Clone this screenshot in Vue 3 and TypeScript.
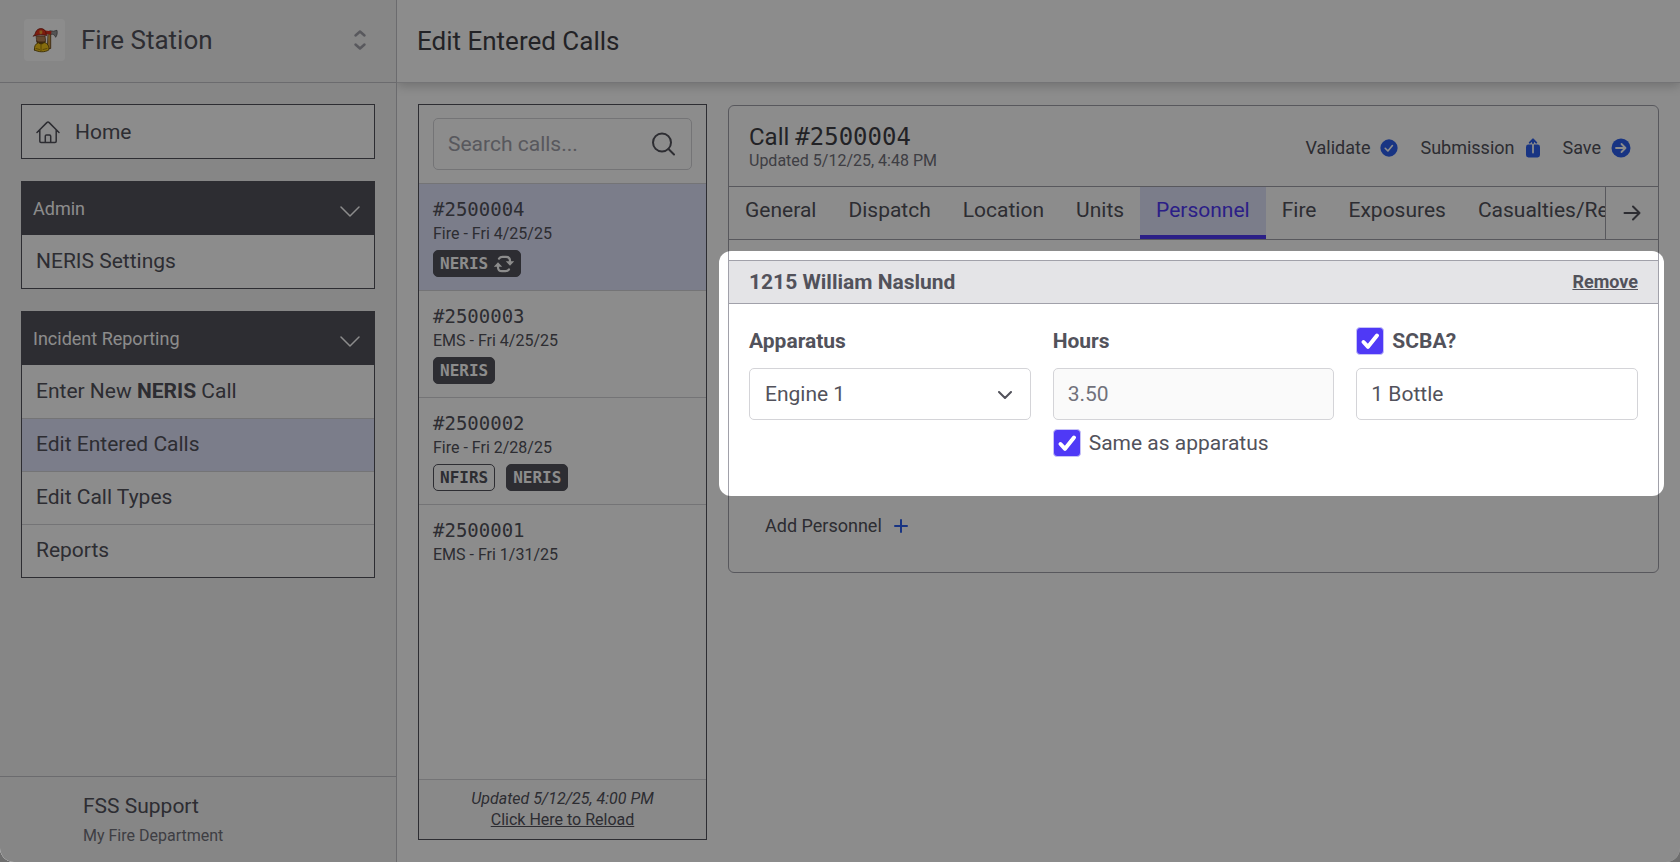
<script setup lang="ts">
import { ref } from 'vue'

interface Call {
  id: string
  summary: string
  badges: { label: string; outline?: boolean; sync?: boolean }[]
}

const calls: Call[] = [
  { id: '#2500004', summary: 'Fire - Fri 4/25/25', badges: [{ label: 'NERIS', sync: true }] },
  { id: '#2500003', summary: 'EMS - Fri 4/25/25', badges: [{ label: 'NERIS' }] },
  { id: '#2500002', summary: 'Fire - Fri 2/28/25', badges: [{ label: 'NFIRS', outline: true }, { label: 'NERIS' }] },
  { id: '#2500001', summary: 'EMS - Fri 1/31/25', badges: [] },
]
const selectedCall = ref('#2500004')

const tabs = ['General', 'Dispatch', 'Location', 'Units', 'Personnel', 'Fire', 'Exposures', 'Casualties/Rescues']
const activeTab = ref('Personnel')

const search = ref('')
const apparatus = ref('Engine 1')
const hours = ref('3.50')
const sameAsApparatus = ref(true)
const scba = ref(true)
const bottles = ref('1 Bottle')
</script>

<template>
  <div class="app">
    <aside class="sidebar">
      <button class="station" type="button">
        <span class="logo">
          <svg viewBox="0 0 26 26" width="26" height="26" aria-hidden="true">
            <path d="M16.500 5.500h2.200v16h-3z" fill="#d9a040" stroke="#5c3a12" stroke-width=".8" />
            <path d="M18 3.800l3.500.4 3.500-.9c.6 2.500 0 5.500-1.400 7-.6-1.800-1.600-2.600-3-3H18z" fill="#9a9a9a" stroke="#4a4a4a" stroke-width=".7" />
            <path d="M13 3.600l6.500.6-.5 3.200-5.500-.3z" fill="#e0301e" />
            <path d="M4.500 9h8.500l.5 4c0 3-2 5-4.500 5s-4.500-2-4.500-5z" fill="#b98457" stroke="#5a3a20" stroke-width=".7" />
            <path d="M4.500 13c1 2 3 1.500 4.500 1.500s3.500.5 4.500-1c0 3.500-2 4.800-4.500 4.800s-4.500-2-4.500-5.300z" fill="#70451f" />
            <path d="M1.500 9c1-1 1.500-1.500 2-3.500C4.500 3 6.500 1.600 8.800 1.600c3 0 5 2 5.200 4.600l.6 2.300c-4-1.200-8-1-13.100.5z" fill="#e3341d" stroke="#7b180c" stroke-width=".8" />
            <path d="M7.500 3.500h2.800v2.800l-1.400 1-1.400-1z" fill="#f0a030" />
            <path d="M2.500 23c-.5-3.500 1-6.500 4-7.200 2 1.700 4 1.500 5.500-.3 3.500.5 5.500 4 4.800 7.500-4 2.400-10 2.400-14.300 0z" fill="#f5c518" stroke="#6b5208" stroke-width=".9" />
            <path d="M9 17.500v6.500M4 21.500l3.500 1M11 22.500l4-1" stroke="#9b7b0c" stroke-width=".9" fill="none" />
          </svg>
        </span>
        <span class="station-name">Fire Station</span>
        <svg class="sort" viewBox="0 0 14 22" width="14" height="22" aria-hidden="true">
          <path d="M2.500 6.500L7 2.500l4.500 4M2.500 15.500L7 19.500l4.500-4" />
        </svg>
      </button>

      <nav class="menu" aria-label="Main">
        <section class="group">
          <a class="home" href="#">
            <svg viewBox="0 0 24 24" width="24" height="24" aria-hidden="true">
              <path d="M1 12.500L10.800 2.600a1.700 1.700 0 0 1 2.400 0L23 12.500M3.800 10v11.200c0 .7.500 1.200 1.200 1.200h14c.7 0 1.200-.5 1.200-1.200V10M9.300 22.400v-6.200c0-.7.500-1.200 1.200-1.200h3c.7 0 1.200.5 1.200 1.200v6.200" />
            </svg>
            Home
          </a>
        </section>
        <section class="group">
          <button class="group-title" type="button">
            Admin
            <svg viewBox="0 0 20 12" width="20" height="12" aria-hidden="true"><path d="M1 1l9 9 9-9" /></svg>
          </button>
          <a class="item" href="#">NERIS Settings</a>
        </section>
        <section class="group">
          <button class="group-title" type="button">
            Incident Reporting
            <svg viewBox="0 0 20 12" width="20" height="12" aria-hidden="true"><path d="M1 1l9 9 9-9" /></svg>
          </button>
          <a class="item" href="#"><span>Enter New <b>NERIS</b> Call</span></a>
          <a class="item current" href="#">Edit Entered Calls</a>
          <a class="item" href="#">Edit Call Types</a>
          <a class="item" href="#">Reports</a>
        </section>
      </nav>

      <footer class="account">
        <span class="account-name">FSS Support</span>
        <span class="account-dept">My Fire Department</span>
      </footer>
    </aside>

    <div class="page">
      <header class="page-header"><h1>Edit Entered Calls</h1></header>

      <main class="content">
        <section class="calls" aria-label="Calls">
          <div class="search-area">
            <label class="search">
              <input v-model="search" type="text" placeholder="Search calls..." aria-label="Search calls" />
              <svg viewBox="0 0 24 24" width="24" height="24" aria-hidden="true">
                <circle cx="11" cy="10.500" r="9" /><path d="M17.500 17L23 22.500" />
              </svg>
            </label>
          </div>
          <button
            v-for="call in calls"
            :key="call.id"
            type="button"
            class="call"
            :class="{ selected: call.id === selectedCall }"
            @click="selectedCall = call.id"
          >
            <span class="call-id">{{ call.id }}</span>
            <span class="call-summary">{{ call.summary }}</span>
            <span v-if="call.badges.length" class="badges">
              <span v-for="badge in call.badges" :key="badge.label" class="badge" :class="{ outline: badge.outline }">
                {{ badge.label }}
                <svg v-if="badge.sync" viewBox="0 0 20 18" width="20" height="18" aria-hidden="true">
                  <path class="line" d="M5 3.600Q6.200 1.800 8.500 1.800h3.500Q16 1.800 16 5.800V7M15 14.400q-1.200 1.800-3.500 1.800H8q-4 0-4-4V11" />
                  <path class="tip" d="M11.800 6.200h8.400L16 10.800zM-.2 11.800h8.400L4 7.200z" />
                </svg>
              </span>
            </span>
          </button>
          <footer class="reload">
            <em>Updated 5/12/25, 4:00 PM</em>
            <a href="#">Click Here to Reload</a>
          </footer>
        </section>

        <section class="detail" aria-label="Call details">
          <header class="detail-header">
            <div class="detail-title">
              <h2>Call <span class="mono">#2500004</span></h2>
              <p>Updated 5/12/25, 4:48 PM</p>
            </div>
            <div class="actions">
              <button type="button">
                Validate
                <svg viewBox="0 0 20 20" width="18" height="18" aria-hidden="true">
                  <circle cx="10" cy="10" r="9.600" fill="#2d60ee" /><path class="glyph" d="M5.800 10.300l3 3 5-6" />
                </svg>
              </button>
              <button type="button">
                Submission
                <svg viewBox="0 0 16 20" width="16" height="20" aria-hidden="true">
                  <rect x="1" y="6.500" width="14" height="13" rx="2.400" fill="#2d60ee" />
                  <path d="M8 6V2M4.800 4.600L8 1.400l3.200 3.200" fill="none" stroke="#2d60ee" stroke-width="2" stroke-linecap="round" stroke-linejoin="round" />
                  <path d="M8 6.500v8" stroke="#fff" stroke-width="1.800" stroke-linecap="round" />
                </svg>
              </button>
              <button type="button">
                Save
                <svg viewBox="0 0 20 20" width="20" height="20" aria-hidden="true">
                  <circle cx="10" cy="10" r="9.500" fill="#2d60ee" /><path class="glyph" d="M5 10h9.500M10.500 6l4 4-4 4" />
                </svg>
              </button>
            </div>
          </header>

          <div class="tab-bar">
            <div class="tabs" role="tablist">
              <button
                v-for="tab in tabs"
                :key="tab"
                type="button"
                role="tab"
                class="tab"
                :class="{ active: tab === activeTab }"
                :aria-selected="tab === activeTab"
                @click="activeTab = tab"
              >{{ tab }}</button>
            </div>
            <button class="more" type="button" aria-label="More tabs">
              <svg viewBox="0 0 18 18" width="18" height="18" aria-hidden="true"><path d="M1.500 9h15M10 2.500L16.500 9 10 15.500" /></svg>
            </button>
          </div>

          <article class="person">
            <header class="person-header">
              <h3>1215 William Naslund</h3>
              <button type="button">Remove</button>
            </header>
            <div class="fields">
              <div class="field">
                <label class="caption" for="apparatus">Apparatus</label>
                <div class="select">
                  <select id="apparatus" v-model="apparatus" class="control">
                    <option>Engine 1</option>
                  </select>
                  <svg viewBox="0 0 14 8" width="14" height="8" aria-hidden="true"><path d="M1 1l6 6 6-6" /></svg>
                </div>
              </div>
              <div class="field">
                <label class="caption" for="hours">Hours</label>
                <input id="hours" v-model="hours" class="control" type="text" :disabled="sameAsApparatus" />
                <label class="check">
                  <input v-model="sameAsApparatus" type="checkbox" />
                  Same as apparatus
                </label>
              </div>
              <div class="field">
                <label class="caption check">
                  <input v-model="scba" type="checkbox" />
                  SCBA?
                </label>
                <input v-model="bottles" class="control" type="text" aria-label="SCBA bottles" />
              </div>
            </div>
            <div class="spotlight" aria-hidden="true"></div>
          </article>

          <button class="add" type="button">
            Add Personnel
            <svg viewBox="0 0 14 14" width="14" height="14" aria-hidden="true"><path d="M7 1v12M1 7h12" /></svg>
          </button>
        </section>
      </main>
    </div>
  </div>
</template>

<style>
body {
  margin: 0;
  background: #6e6e6e;
}
</style>

<style scoped>
.app {
  display: flex;
  min-height: 100vh;
  overflow: hidden;
  position: relative;
  box-sizing: border-box;
  border-radius: 0 0 14px 14px;
  background: #fff;
  color: #52525b;
  font: 21px/28px Roboto, "Liberation Sans", sans-serif;
}
.app * {
  box-sizing: border-box;
}
button,
input,
select {
  font: inherit;
  color: inherit;
  margin: 0;
}
button {
  background: none;
  border: 0;
  padding: 0;
  text-align: left;
  cursor: pointer;
}
h1,
h2,
h3,
p {
  margin: 0;
  font-weight: 400;
}
svg {
  flex: none;
  fill: none;
  stroke-linecap: round;
  stroke-linejoin: round;
}
a {
  color: inherit;
  text-decoration: none;
}

/* Sidebar */
.sidebar {
  position: relative;
  z-index: 1;
  width: 397px;
  flex: none;
  display: flex;
  flex-direction: column;
  background: #f4f4f5;
  border-right: 1px solid #c4c4c8;
}
.station {
  display: flex;
  align-items: center;
  height: 83px;
  padding: 0 29px 2px 24px;
  border-bottom: 1px solid #c4c4c8;
}
.logo {
  width: 41px;
  height: 42px;
  display: grid;
  place-items: center;
  border-radius: 4px;
  background: #fff;
}
.station-name {
  flex: 1;
  margin-left: 16px;
  font-size: 26px;
  line-height: 36px;
}
.sort {
  stroke: #a1a1aa;
  stroke-width: 2.500;
}
.menu {
  flex: 1;
  display: flex;
  flex-direction: column;
  gap: 22px;
  padding: 21px;
}
.group {
  display: flex;
  flex-direction: column;
  border: 1px solid #52525b;
  background: #fff;
}
.home,
.item {
  display: flex;
  align-items: center;
  height: 53px;
  padding: 0 14px;
}
.item {
  padding-bottom: 2px;
}
.home {
  gap: 15px;
}
.home svg {
  stroke: #52525b;
  stroke-width: 1.500;
}
.item + .item {
  border-top: 1px solid #d4d4d8;
}
.group-title {
  display: flex;
  align-items: center;
  justify-content: space-between;
  height: 53px;
  padding: 0 14px 0 11px;
  background: #52525b;
  color: #fff;
  font-size: 18px;
}
.group-title svg {
  stroke: #fff;
  stroke-width: 1.500;
  margin-top: 6px;
}
.current {
  background: #e0e3fb;
}
.account {
  display: flex;
  flex-direction: column;
  gap: 4px;
  padding: 15px 83px 14px;
  border-top: 1px solid #c4c4c8;
}
.account-dept {
  font-size: 16px;
  line-height: 24px;
  color: #71717a;
}

/* Page */
.page {
  flex: 1;
  min-width: 0;
  display: flex;
  flex-direction: column;
}
.page-header {
  height: 83px;
  display: flex;
  align-items: center;
  padding: 0 20px;
  border-bottom: 1px solid #d4d4d8;
  box-shadow: 0 3px 10px rgba(0, 0, 0, 0.2);
  color: #3f3f46;
}
h1 {
  font-size: 26px;
  line-height: 36px;
}
.content {
  flex: 1;
  display: flex;
  align-items: flex-start;
  gap: 21px;
  padding: 21px 21px 22px;
}

/* Calls list */
.calls {
  width: 289px;
  flex: none;
  align-self: stretch;
  display: flex;
  flex-direction: column;
  border: 1px solid #52525b;
}
.search-area {
  padding: 13px 14px;
}
.search {
  display: flex;
  align-items: center;
  height: 52px;
  padding: 0 16px 0 14px;
  border: 1px solid #d4d4d8;
  border-radius: 5px;
}
.search input {
  flex: 1;
  min-width: 0;
  border: 0;
  padding: 0;
  outline: 0;
  background: none;
}
.search input::placeholder {
  color: #a1a1aa;
  opacity: 1;
}
.search svg {
  stroke: #52525b;
  stroke-width: 2;
}
.call {
  display: flex;
  flex-direction: column;
  padding: 13px 14px;
  border-top: 1px solid #d4d4d8;
}
.call.selected {
  background: #e0e3fb;
}
.mono,
.call-id,
.badge {
  font-family: "DejaVu Sans Mono", "Liberation Mono", monospace;
}
.call-id {
  font-size: 19px;
  line-height: 25px;
}
.call-summary {
  font-size: 16px;
  line-height: 24px;
}
.badges {
  display: flex;
  gap: 11px;
  margin-top: 4px;
}
.badge {
  display: flex;
  align-items: center;
  gap: 6px;
  height: 27px;
  padding: 0 6px;
  border: 1px solid #52525b;
  border-radius: 5px;
  background: #52525b;
  color: #fff;
  font-size: 16px;
  font-weight: 700;
}
.badge.outline {
  background: none;
  color: #52525b;
}
.badge .line {
  stroke: #fff;
  stroke-width: 2.200;
}
.badge .tip {
  fill: #fff;
}
.reload {
  margin-top: auto;
  display: flex;
  flex-direction: column;
  align-items: center;
  padding: 8px 0 9px;
  border-top: 1px solid #d4d4d8;
  background: #fafafa;
  font-size: 16px;
  line-height: 21px;
}
.reload a {
  text-decoration: underline;
}

/* Call details */
.detail {
  flex: 1;
  min-width: 0;
  margin-top: 1px;
  border: 1px solid #a1a1aa;
  border-radius: 6px;
}
.detail-header {
  display: flex;
  align-items: center;
  justify-content: space-between;
  height: 80px;
  padding: 0 27px 0 20px;
}
.detail-title {
  padding-top: 2px;
}
h2 {
  font-size: 24px;
  line-height: 28px;
  color: #3f3f46;
}
.detail-header p {
  font-size: 16px;
  line-height: 20px;
  color: #71717a;
}
.actions {
  display: flex;
  gap: 22px;
  margin-top: 4px;
  font-size: 18px;
}
.actions button {
  display: flex;
  align-items: center;
  gap: 10px;
}
.glyph {
  stroke: #fff;
  stroke-width: 1.800;
}
.tab-bar {
  display: flex;
  height: 54px;
  border-top: 1px solid #a1a1aa;
  border-bottom: 1px solid #a1a1aa;
}
.tabs {
  flex: 1;
  min-width: 0;
  display: flex;
  overflow: hidden;
}
.tab {
  flex: none;
  padding: 0 16px 3px;
  border-bottom: 4px solid transparent;
}
.tab.active {
  border-color: #4f39f6;
  background: #e0e3fb;
  color: #4f39f6;
}
.more {
  width: 53px;
  flex: none;
  display: grid;
  place-items: center;
  border-left: 1px solid #a1a1aa;
}
.more svg {
  stroke: #52525b;
  stroke-width: 2;
}
.person {
  position: relative;
  margin-top: 20px;
  padding-bottom: 15px;
}
.person-header {
  display: flex;
  align-items: center;
  justify-content: space-between;
  height: 44px;
  padding: 0 20px;
  border-top: 1px solid #a1a1aa;
  border-bottom: 1px solid #a1a1aa;
  background: #e4e4e7;
}
h3,
.caption {
  font-size: 21px;
  font-weight: 700;
}
.person-header button {
  font-size: 18px;
  font-weight: 700;
  text-decoration: underline;
}
.fields {
  display: grid;
  grid-template-columns: repeat(3, 1fr);
  gap: 22px;
  padding: 23px 20px 24px;
}
.field {
  display: flex;
  flex-direction: column;
}
.control {
  width: 100%;
  height: 52px;
  margin-top: 13px;
  padding: 0 14px;
  border: 1px solid #d4d4d8;
  border-radius: 5px;
  background: #fff;
}
.control:disabled {
  background: #fafafa;
  color: #71717a;
}
.select {
  display: grid;
  align-items: center;
}
.select > * {
  grid-area: 1 / 1;
}
.select .control {
  appearance: none;
  padding: 0 15px;
}
.select svg {
  justify-self: end;
  margin: 15px 19px 0 0;
  stroke: #52525b;
  stroke-width: 2;
  pointer-events: none;
}
.check {
  display: flex;
  align-items: center;
  gap: 8px;
}
.control + .check {
  margin-top: 9px;
}
.check input {
  appearance: none;
  flex: none;
  width: 28px;
  height: 28px;
  border: 1px solid #c7c2f8;
  border-radius: 4px;
  background: #fff;
}
.check input:checked {
  background: #4f39f6 url("data:image/svg+xml,%3Csvg xmlns='http://www.w3.org/2000/svg' viewBox='0 0 26 26'%3E%3Cpath d='M6.500 14l4.500 4.800L20 7.500' fill='none' stroke='white' stroke-width='4' stroke-linecap='round' stroke-linejoin='round'/%3E%3C/svg%3E") center / 26px 26px no-repeat;
}
.spotlight {
  position: absolute;
  z-index: 2;
  inset: -9px -6px 0 -10px;
  border-radius: 12px;
  box-shadow: 0 0 0 200vmax rgba(0, 0, 0, 0.45);
  pointer-events: none;
}
.add {
  display: flex;
  align-items: center;
  gap: 12px;
  margin: 16px 36px 32px;
  font-size: 18px;
}
.add svg {
  stroke: #2d60ee;
  stroke-width: 2;
}
</style>
